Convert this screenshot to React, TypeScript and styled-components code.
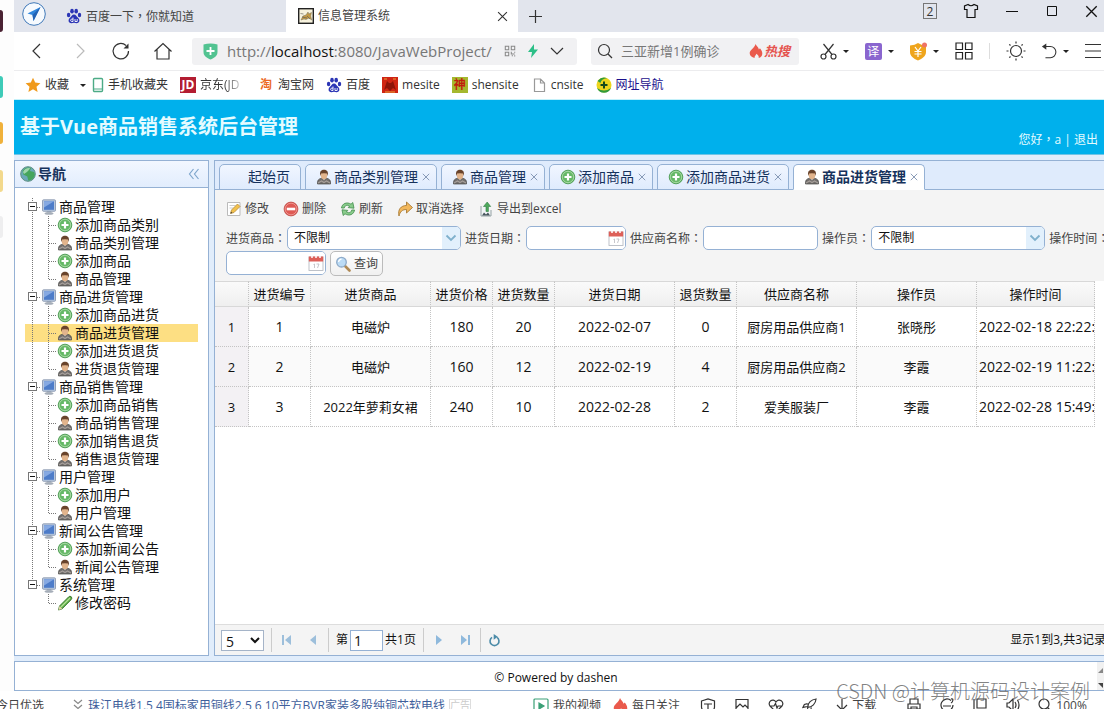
import React from "react";
import styled, { createGlobalStyle, css } from "styled-components";

const Global = createGlobalStyle`
  *, *::before, *::after { box-sizing: border-box; }
  html, body, #root { height: 100%; margin: 0; }
  body {
    overflow: hidden;
    background: #fff;
    font: 12px/18px "Open Sans", "Noto Sans CJK SC", sans-serif;
    color: #333;
  }
  button, input, select { font: inherit; color: inherit; margin: 0; }
  button { background: none; border: 0; padding: 0; }
  svg { display: block; flex: none; }
  a { color: inherit; text-decoration: none; }
`;

const LINE = "#95b1d4";

/* ---------- page frame ---------- */

const Screen = styled.div`
  position: relative;
  display: flex;
  flex-direction: column;
  height: 100vh;
  overflow: hidden;
`;
const Desk = styled.div`
  display: flex;
  flex: 1;
  min-height: 0;
`;
const Gutter = styled.aside`
  display: flex;
  flex-direction: column;
  flex: 0 0 14px;
  gap: 24px;
  padding-top: 10px;
  background: #fdfdfd;
`;
const Chip = styled.span<{ $color: string; $space?: number }>`
  width: 3px;
  height: 22px;
  margin-top: ${(p) => p.$space ?? 0}px;
  border-radius: 0 6px 6px 0;
  background: ${(p) => p.$color};
`;
const Browser = styled.div`
  display: flex;
  flex-direction: column;
  flex: 1;
  min-width: 0;
`;
/* Full-width punctuation centred in its square. */
const Mark = styled.i`
  font-family: "Noto Sans CJK TC", sans-serif;
  font-style: normal;
`;

/* ---------- browser chrome ---------- */

const TabStrip = styled.div`
  display: flex;
  height: 32px;
  background: #e2e5ed;
`;
const BrowserTab = styled.div<{ $active?: boolean }>`
  display: flex;
  align-items: center;
  gap: 4px;
  flex: 0 0 232px;
  padding: 0 10px 0 12px;
  background: ${(p) => (p.$active ? "#fff" : "transparent")};
  color: #444;
  span { flex: 1; white-space: nowrap; }
`;
const Launcher = styled.button`
  flex: 0 0 40px;
  padding-left: 8px;
  margin-top: -4px;
`;
const NewTab = styled.button`
  padding: 0 11px;
`;
const WindowTools = styled.div`
  display: flex;
  align-items: center;
  gap: 26px;
  height: 22px;
  margin-left: auto;
  padding-right: 6px;
`;
const WindowCount = styled.button`
  width: 14px;
  height: 16px;
  border: 1px solid #777;
  line-height: 13px;
`;
const AddressRow = styled.div`
  display: flex;
  align-items: center;
  height: 39px;
  border-bottom: 1px solid #ececee;
`;
const NavButtons = styled.div`
  display: flex;
  gap: 22px;
  flex: 0 0 178px;
  padding-left: 13px;
`;
const UrlBox = styled.div`
  display: flex;
  align-items: center;
  flex: 0 1 385px;
  height: 27px;
  padding: 0 13px 0 11px;
  border-radius: 3px;
  background: #f1f1f3;
`;
const Url = styled.div`
  flex: 1;
  padding-left: 9px;
  font-size: 15px;
  color: #777;
  white-space: nowrap;
  b { font-weight: 400; color: #111; }
`;
const UrlTools = styled.div`
  display: flex;
  align-items: center;
  gap: 11px;
`;
const SearchBox = styled.label`
  display: flex;
  align-items: center;
  gap: 8px;
  flex: 0 1 208px;
  min-width: 0;
  height: 27px;
  margin-left: 14px;
  padding: 0 9px 0 6px;
  border-radius: 3px;
  background: #f1f1f3;
  input {
    flex: 1;
    min-width: 0;
    padding: 0;
    border: 0;
    outline: 0;
    background: none;
    font-size: 13px;
  }
  input::placeholder { color: #777; opacity: 1; }
`;
const Hot = styled.span`
  display: flex;
  align-items: center;
  gap: 1px;
  font-size: 13px;
  font-weight: 700;
  font-style: italic;
  color: #e5544f;
`;
const AddressTools = styled.div`
  display: flex;
  align-items: center;
  justify-content: space-between;
  flex: 1;
  padding: 0 3px 0 21px;
`;
const WithCaret = styled.button`
  display: flex;
  align-items: center;
  gap: 6px;
  &::after {
    content: "";
    border: 3px solid transparent;
    border-top-color: #222;
    border-bottom: 0;
  }
`;
const Translate = styled.span`
  width: 17px;
  height: 17px;
  border-radius: 2px;
  background: #8a66cf;
  color: #fff;
  line-height: 17px;
`;
const Divider = styled.span`
  width: 1px;
  height: 16px;
  background: #ddd;
`;
const Bookmarks = styled.nav`
  display: flex;
  align-items: center;
  gap: 12px;
  height: 29px;
  padding-left: 11px;
  border-bottom: 1px solid #c4f1fa;
`;
const Bookmark = styled.a<{ $tone?: string; $fade?: boolean }>`
  display: flex;
  align-items: center;
  gap: 4px;
  font-size: 12px;
  white-space: nowrap;
  color: ${(p) => p.$tone ?? "#333"};
  ${(p) => p.$fade && css`
    min-width: 66px;
    span:last-child {
      background: linear-gradient(90deg, #333 60%, #ccc);
      background-clip: text;
      color: transparent;
    }
  `}
`;
const MenuCaret = styled.span`
  margin-left: 7px;
  margin-right: -6px;
  border: 3px solid transparent;
  border-top-color: #222;
  border-bottom: 0;
`;
const Square = styled.span<{ $bg: string; $fg: string }>`
  width: 16px;
  height: 16px;
  background: ${(p) => p.$bg};
  color: ${(p) => p.$fg};
  font-weight: 700;
  line-height: 16px;
  text-align: center;
`;

/* ---------- application ---------- */

const App_ = styled.main`
  display: flex;
  flex-direction: column;
  flex: 1;
  min-height: 0;
  background: #e1edfb;
`;
const Banner = styled.header`
  display: flex;
  justify-content: space-between;
  height: 55px;
  padding: 0 6px;
  border-bottom: 1px solid #6fc4e6;
  background: #00b0ec;
  color: #e4fbff;
  h1 { margin: 0; font-size: 20px; line-height: 54px; }
`;
const Account = styled.div`
  align-self: flex-end;
  padding-bottom: 5px;
  white-space: pre;
`;
const Columns = styled.div`
  display: flex;
  flex: 1;
  gap: 5px;
  min-height: 0;
  margin: 5px -6px 5px 0;
`;
const Sidebar = styled.aside`
  flex: 0 0 195px;
  border: 1px solid ${LINE};
  background: #fff;
`;
const SideHead = styled.div`
  display: flex;
  align-items: center;
  gap: 2px;
  height: 27px;
  padding: 0 8px 0 5px;
  border-bottom: 1px solid ${LINE};
  background: linear-gradient(#f2f7ff, #e2edfd);
  color: #16325c;
  h2 { flex: 1; margin: 0; font-size: 14px; line-height: 18px; }
`;
const Tree = styled.ul`
  margin: 0;
  padding: 10px;
  list-style: none;
  font-size: 14px;
  color: #111;
`;
const Node = styled.a<{ $selected?: boolean }>`
  display: flex;
  align-items: center;
  height: 18px;
  background: ${(p) => (p.$selected ? "#fddf83" : "transparent")};
  white-space: nowrap;
  span { margin-left: 2px; }
`;
const Work = styled.section`
  display: flex;
  flex-direction: column;
  flex: 1;
  min-width: 0;
  border: 1px solid ${LINE};
  background: #fff;
`;
const Tabs = styled.div`
  display: flex;
  gap: 4px;
  height: 29px;
  padding: 3px 4px 0;
  border-bottom: 1px solid ${LINE};
  background: #dfebfc;
`;
const Tab = styled.button<{ $active?: boolean; $plain?: boolean }>`
  display: flex;
  align-items: center;
  height: 26px;
  padding: 0 ${(p) => (p.$plain ? 10 : 6)}px 0 ${(p) => (p.$plain ? 28 : 10)}px;
  border: 1px solid ${LINE};
  border-bottom-color: ${(p) => (p.$active ? "#fff" : LINE)};
  border-radius: 5px 5px 0 0;
  background: ${(p) => (p.$active ? "#fff" : "linear-gradient(#f1f6ff, #dfebfd)")};
  font-size: 14px;
  font-weight: ${(p) => (p.$active ? 700 : 400)};
  color: #16325c;
  white-space: nowrap;
  span { margin: 0 4px 0 2px; }
`;
const Tools = styled.div`
  padding: 6px 11px 5px;
  background: #f4f4f4;
`;
const ToolRow = styled.div`
  display: flex;
  align-items: center;
  gap: 14px;
  height: 26px;
  margin-bottom: 4px;
  color: #444;
`;
const ToolButton = styled.button`
  display: flex;
  align-items: center;
  gap: 3px;
`;
const FilterRow = styled.div`
  display: flex;
  gap: 4px;
  height: 25px;
  color: #444;
`;
const Field = styled.label<{ $width: number }>`
  display: flex;
  align-items: center;
  gap: 1px;
  flex: none;
  white-space: nowrap;
  height: 24px;
  > div {
    position: relative;
    width: ${(p) => p.$width}px;
  }
  input, select {
    display: block;
    width: 100%;
    height: 24px;
    padding: 0 6px;
    border: 1px solid ${LINE};
    border-radius: 5px;
    outline: 0;
    background: #fff;
    color: #111;
    appearance: none;
  }
`;
const Adorn = styled.span<{ $tint?: boolean }>`
  position: absolute;
  top: 1px;
  right: 1px;
  display: flex;
  align-items: center;
  justify-content: center;
  width: 18px;
  height: 22px;
  border-radius: 0 4px 4px 0;
  background: ${(p) => (p.$tint ? "#e2f0fc" : "#fff")};
  pointer-events: none;
`;
const QueryButton = styled.button`
  display: flex;
  align-items: center;
  gap: 3px;
  height: 25px;
  padding: 0 4px;
  border: 1px solid #bbb;
  border-radius: 5px;
  background: linear-gradient(#fff, #f0f0f0);
`;
const GridArea = styled.div`
  flex: 1;
  min-height: 0;
  overflow: hidden;
`;
const Grid = styled.table`
  width: 880px;
  table-layout: fixed;
  border-collapse: separate;
  border-spacing: 0;
  color: #111;
  th, td {
    padding: 0 2px;
    border: 0 dotted #c4c4c4;
    border-width: 0 1px 1px 0;
    overflow: hidden;
    white-space: nowrap;
    text-align: center;
    font-weight: 400;
    font-size: 13px;
  }
  th:last-child, td:last-child { text-align: left; }
  thead th {
    height: 26px;
    border-top: 1px solid #d8d8d8;
    border-bottom: 1px solid #d8d8d8;
    background: linear-gradient(#fafafa, #efefef);
  }
  thead th:last-child { text-align: center; }
  tbody th { height: 40px; background: #f3f1f4; }
  tbody tr:nth-child(even) td { background: #fafafa; }
`;
const Cell = styled.td<{ $numeric?: boolean }>`
  && { font-size: ${(p) => (p.$numeric ? 14 : 13)}px; }
`;
const Pager = styled.div`
  display: flex;
  align-items: center;
  height: 31px;
  padding: 0 3px 0 6px;
  border-top: 1px solid #ddd;
  background: #f4f4f4;
  color: #111;
  white-space: nowrap;
`;
const PageSize = styled.select`
  width: 43px;
  height: 21px;
  padding: 0;
  border: 1px solid #a5b4c8;
  background: #fff;
  font-size: 14px;
  line-height: 18px;
`;
const PagerGroup = styled.div`
  display: flex;
  align-items: center;
  gap: 10px;
  height: 24px;
  margin-left: 7px;
  padding-left: 7px;
  border-left: 1px solid #ccc;
`;
const PageNumber = styled.label`
  display: flex;
  align-items: center;
  gap: 2px;
  input {
    width: 33px;
    height: 21px;
    padding: 0 3px;
    border: 1px solid ${LINE};
    font-size: 14px;
  }
`;
const Total = styled.span`
  margin-left: auto;
`;
const Footer = styled.footer`
  display: flex;
  height: 30px;
  border: 1px solid ${LINE};
  border-right: 0;
  background: #fff;
  color: #111;
  p { flex: 1; margin: 0; text-align: center; line-height: 32px; font-size: 12px; }
`;
const ScrollStub = styled.div`
  display: flex;
  flex-direction: column;
  justify-content: space-between;
  width: 7px;
  padding: 6px 0 2px;
  background: #f1f1f1;
`;

/* ---------- browser status line ---------- */

const Status = styled.div`
  display: flex;
  align-items: flex-start;
  height: 18px;
  overflow: hidden;
  white-space: nowrap;
  line-height: 29px;
  color: #444;
  > * { flex: none; }
  svg { margin-top: 7px; }
`;
const StatusItem = styled.a<{ $tone?: string }>`
  display: flex;
  gap: 4px;
  margin-right: 12px;
  color: ${(p) => p.$tone ?? "#444"};
`;
const Promo = styled.div`
  display: flex;
  gap: 4px;
  flex: 0 0 533px;
  > span { margin-left: -4px; margin-right: 24px; }
`;
const AdTag = styled.small`
  height: 12px;
  margin-top: 8px;
  border: 1px solid #ddd;
  font-size: 10px;
  line-height: 10px;
  color: #ccc;
`;
const StatusIcons = styled.div`
  display: flex;
  flex: 1;
  justify-content: space-between;
  padding: 0 5px 0 8px;
`;
const Watermark = styled.div`
  position: absolute;
  right: 14px;
  bottom: 4px;
  font: 300 20px/28px "Noto Sans CJK SC", sans-serif;
  color: rgba(90, 90, 90, 0.75);
  pointer-events: none;
`;

/* ---------- icons ---------- */

type IconProps = { w?: number; h?: number; box?: string; color?: string; children: React.ReactNode };
const Line = ({ w = 20, h = w, box = "0 0 20 20", color = "#333", children }: IconProps) => (
  <svg width={w} height={h} viewBox={box} fill="none" stroke={color} strokeWidth="1.2" aria-hidden="true">
    {children}
  </svg>
);
const Art = ({ w = 16, h = w, box = "0 0 16 16", children }: IconProps) => (
  <svg width={w} height={h} viewBox={box} aria-hidden="true">{children}</svg>
);

const Paw = () => (
  <Art>
    <g fill="#2b35b5">
      <ellipse cx="2.6" cy="7" rx="1.7" ry="2.2" />
      <ellipse cx="6" cy="3.2" rx="1.8" ry="2.4" />
      <ellipse cx="10.2" cy="3.2" rx="1.8" ry="2.4" />
      <ellipse cx="13.5" cy="7" rx="1.7" ry="2.2" />
      <path d="M8 6.600c2 0 2.600 2 4 3.200 2.200 1.800 1.800 5.400-1.400 5.400-1 0-1.700-.4-2.600-.4s-1.600.4-2.600.4c-3.200 0-3.600-3.600-1.400-5.400C5.400 8.600 6 6.600 8 6.600z" />
    </g>
    <path d="M7 9.500v4H5.800c-1.600 0-1.600-2.400 0-2.400H7M9 11v2.500h2.200V11" fill="none" stroke="#fff" strokeWidth=".9" />
  </Art>
);
const CatIcon = () => (
  <Art>
    <rect x=".7" y=".7" width="14.600" height="14.600" fill="#f7f2dd" stroke="#222" strokeWidth="1.400" />
    <path d="M3 12l2-4 3-1 2-3 .8 2 2.700-1.500-.8 3.500 1 4-2.700-2-3 1.500-2-.5z" fill="#c49a45" stroke="#77705a" strokeWidth=".5" />
    <path d="M2.500 5.500l3 .5M4 9l5 1M9 8l3 3" stroke="#555" strokeWidth=".6" />
  </Art>
);
const Flame = ({ size = 14 }: { size?: number }) => (
  <Art w={size}>
    <path d="M7.500 0c.6 2.300 3.400 3.500 3.800 6.200l1.200-1.400c1.500 2 2.700 3.700 2.700 6 0 2.700-1.800 4.600-4.200 5.200.8-1.800-.6-3.400-2.600-5-.2 1.900-2.600 2.700-2 5C3.200 15.500.8 13.600.8 10.700.8 6.600 6.200 5 7.500 0z" fill="#ea5a4c" />
  </Art>
);
const Shield = () => (
  <Art w={15} h={17} box="0 0 15 17">
    <path d="M.5 1.500Q7.500-.5 14.500 1.500V9c0 4-3.500 6-7 7.500C4 15 .5 13 .5 9z" fill="#52c391" />
    <path d="M7.500 4v8M3.500 8h8" stroke="#fff" strokeWidth="1.800" />
  </Art>
);
const YuanShield = () => (
  <Art w={18} h={19} box="0 0 18 19">
    <path d="M1 3.500Q6 3 9 1q3 2 8 2.500V10c0 4-3.500 6.500-8 8.500C4.500 16.500 1 14 1 10z" fill="#efa51d" />
    <path d="M6 5l3 4 3-4M9 9v6M5.500 9.500h7M5.500 12h7" stroke="#fff" strokeWidth="1.200" fill="none" />
    <circle cx="15.500" cy="3" r="2.500" fill="#ef7466" />
  </Art>
);
const Globe = () => (
  <Art>
    <circle cx="8" cy="8" r="7.300" fill="#6aa9b8" stroke="#5d8f83" />
    <path d="M2.500 5c2-4 7-4 8.500-3l-1 3 4 1 .8 3c-1 4-4 5.500-6.500 5.500l-1-4-4-2z" fill="#45a55c" />
    <path d="M3 6Q5 1.500 10 2 9 5 4 8z" fill="#b5e2c2" opacity=".8" />
  </Art>
);
const Monitor = () => (
  <Art>
    <path d="M6 12h4l1 2.500H5z" fill="#b9c0c9" />
    <ellipse cx="8" cy="14.500" rx="4.500" ry="1.300" fill="#a5adb8" />
    <rect x="1.500" y=".8" width="13" height="11.500" rx="1" fill="#b7c7de" stroke="#8191aa" strokeWidth=".8" />
    <rect x="3" y="2.300" width="10" height="8.500" fill="#4d7cc9" />
    <path d="M3 2.300h10L3 8.500z" fill="#86a9e2" />
  </Art>
);
const Plus = () => (
  <Art>
    <circle cx="8" cy="8" r="6.800" fill="#65b866" stroke="#4a9a50" strokeWidth=".9" />
    <circle cx="8" cy="8" r="5.700" fill="none" stroke="#b7e0b2" strokeWidth=".8" />
    <path d="M8 4.500v7M4.500 8h7" stroke="#fff" strokeWidth="2.200" />
  </Art>
);
const Person = () => (
  <Art>
    <path d="M1.500 15c-.5-3.500 1-5.200 4-5.800h5c3 .6 4.500 2.300 4 5.800z" fill="#716d6b" stroke="#4b4a49" strokeWidth=".7" />
    <path d="M2 14l3.500-2 2.500 1.500 2.500-1.500 3.500 2" stroke="#a7a09b" strokeWidth="1.100" fill="none" />
    <path d="M6.500 9.500L8 11.500l1.500-2z" fill="#c9c2bd" />
    <ellipse cx="8" cy="6.300" rx="3.200" ry="3.900" fill="#e2b48c" />
    <path d="M4.300 7C3.400 3 4.800.8 8 .8s4.600 2.200 3.700 6.200l-.8-2.400q-2.900-.9-5.800 0z" fill="#69432b" />
  </Art>
);
const Pencil = () => (
  <Art>
    <path d="M1.500 15l1-4L11.500 2q1.500-1.500 2.800-.2T14 4.800L5.200 13.800z" fill="#5cab46" stroke="#35752b" strokeWidth=".9" />
    <path d="M4 12L13 3" stroke="#b5e398" strokeWidth="1.200" />
    <path d="M1.500 15l1-4 2.700 2.800z" fill="#e7d6a8" />
  </Art>
);
const EditNote = () => (
  <Art>
    <path d="M1.500 1.500h12.500v13H1.500z" fill="#fff" stroke="#bbb" />
    <path d="M3.500 4.500h6M3.500 7h4" stroke="#ccc" />
    <path d="M4.500 12.500l1-3.500 6-6 2.500 2.500L8 11.500z" fill="#f2c14c" stroke="#b58a3c" strokeWidth=".8" />
    <path d="M4.500 12.500l.5-1.800 1.300 1.300z" fill="#333" />
  </Art>
);
const Minus = () => (
  <Art>
    <circle cx="8" cy="8" r="6.900" fill="#df5a54" stroke="#bb4743" strokeWidth=".8" />
    <circle cx="8" cy="8" r="5.800" fill="none" stroke="#f2a9a4" strokeWidth=".7" />
    <rect x="3.800" y="6.700" width="8.400" height="2.600" fill="#fff" />
  </Art>
);
const Reload = () => (
  <Art>
    <path d="M1.500 7C2 2.500 7 .5 11 3.200L12.800 1.500 14 7.200 8.200 6.600 9.600 5C7 3.500 4.800 4.500 4.300 7z" fill="#8acc8c" stroke="#3f8c4a" strokeWidth=".8" />
    <path d="M14.500 9c-.5 4.500-5.500 6.500-9.500 3.800L3.200 14.500 2 8.800l5.800.6L6.400 11c2.600 1.500 4.800.5 5.300-2z" fill="#8acc8c" stroke="#3f8c4a" strokeWidth=".8" />
  </Art>
);
const Redo = () => (
  <Art>
    <path d="M2 15C.5 8.500 4 4.500 9.500 4.500V1l6 5.500-6 5.500V8.500C5.500 8.500 3 10.500 2 15z" fill="#f2b75b" stroke="#a87a35" strokeWidth=".9" />
  </Art>
);
const Export = () => (
  <Art>
    <path d="M3 5v10h10V9" fill="#f0f4f5" stroke="#8b989c" strokeWidth=".9" />
    <path d="M4 14.500l2-3 2 2 2-2 2 3z" fill="#46545c" />
    <path d="M8 10.500V5.500H5.500L9.200 1l3.500 4.500h-2.300v5z" fill="#4ea95c" stroke="#2f7d43" strokeWidth=".6" />
  </Art>
);
const CalendarIcon = () => (
  <Art>
    <rect x="1" y="2" width="14" height="13.500" fill="#fff" stroke="#b8bcc4" strokeWidth=".9" />
    <path d="M.8 1.500h14.400V6.500H.8z" fill="#dd5f58" />
    <path d="M4 0v3M8 0v3M12 0v3" stroke="#fff" strokeWidth="1.500" />
    <path d="M5.500 9.500L6.500 9v4M8.500 9h2.500l-1.500 4" stroke="#b9b9bf" strokeWidth=".8" fill="none" />
  </Art>
);
const Lens = () => (
  <Art>
    <path d="M10 10l4.500 4.500" stroke="#b08a55" strokeWidth="2.600" strokeLinecap="round" />
    <circle cx="6.500" cy="6.200" r="4.800" fill="#bcdcf6" stroke="#8fabc9" strokeWidth="1.300" />
    <path d="M3.500 6q.5-2.700 3-2.900" stroke="#fff" strokeWidth="1.200" fill="none" />
  </Art>
);
const CloseX = ({ size = 8, color = "#6e84a5" }: { size?: number; color?: string }) => (
  <Line w={size} box="0 0 10 10" color={color}><path d="M1 1l8 8M9 1L1 9" strokeWidth="1" /></Line>
);
const Chevron = ({ color = "#7fb0cc" }: { color?: string }) => (
  <Line w={12} h={8} box="0 0 12 8" color={color}><path d="M1.500 1.500L6 6l4.500-4.500" strokeWidth="1.800" /></Line>
);

/* Dotted connector of a tree row: how far the stem runs and whether it branches. */
const Join = ({ kind }: { kind: "stem" | "branch" | "last" | "box" | "boxLast" | "none" }) => (
  <svg width="16" height="18" viewBox="0 0 16 18" fill="none" stroke="#777" strokeDasharray="1 1" aria-hidden="true">
    {kind !== "none" && <path d={kind === "last" || kind === "boxLast" ? "M7.500 0v9" : "M7.500 0v18"} />}
    {kind !== "none" && kind !== "stem" && <path d="M8 9.500h8" />}
    {kind.startsWith("box") && (
      <g strokeDasharray="none">
        <rect x="3.500" y="4.500" width="8" height="8" fill="#fff" stroke="#777" />
        <path d="M5 8.500h5" stroke="#111" />
      </g>
    )}
  </svg>
);

/* ---------- data ---------- */

const leafIcons = { add: Plus, person: Person, pencil: Pencil };
const menu: { title: string; items: [keyof typeof leafIcons, string][] }[] = [
  { title: "商品管理", items: [["add", "添加商品类别"], ["person", "商品类别管理"], ["add", "添加商品"], ["person", "商品管理"]] },
  { title: "商品进货管理", items: [["add", "添加商品进货"], ["person", "商品进货管理"], ["add", "添加进货退货"], ["person", "进货退货管理"]] },
  { title: "商品销售管理", items: [["add", "添加商品销售"], ["person", "商品销售管理"], ["add", "添加销售退货"], ["person", "销售退货管理"]] },
  { title: "用户管理", items: [["add", "添加用户"], ["person", "用户管理"]] },
  { title: "新闻公告管理", items: [["add", "添加新闻公告"], ["person", "新闻公告管理"]] },
  { title: "系统管理", items: [["pencil", "修改密码"]] },
];
const openTabs: [React.FC, string][] = [
  [Person, "商品类别管理"], [Person, "商品管理"], [Plus, "添加商品"], [Plus, "添加商品进货"], [Person, "商品进货管理"],
];
const tools: [React.FC, string][] = [
  [EditNote, "修改"], [Minus, "删除"], [Reload, "刷新"], [Redo, "取消选择"], [Export, "导出到excel"],
];
const widths = [34, 62, 120, 62, 62, 120, 62, 120, 120, 118];
const heads = ["进货编号", "进货商品", "进货价格", "进货数量", "进货日期", "退货数量", "供应商名称", "操作员", "操作时间"];
const rows = [
  ["1", "电磁炉", "180", "20", "2022-02-07", "0", "厨房用品供应商1", "张晓彤", "2022-02-18 22:22:"],
  ["2", "电磁炉", "160", "12", "2022-02-19", "4", "厨房用品供应商2", "李霞", "2022-02-19 11:22:"],
  ["3", "2022年萝莉女裙", "240", "10", "2022-02-28", "2", "爱美服装厂", "李霞", "2022-02-28 15:49:"],
];

/* ---------- sections ---------- */

const Caption = ({ text }: { text: string }) => <span>{text}<Mark>：</Mark></span>;

const Choice = ({ label }: { label: string }) => (
  <Field $width={174}>
    <Caption text={label} />
    <div>
      <select><option>不限制</option></select>
      <Adorn $tint><Chevron /></Adorn>
    </div>
  </Field>
);

const Chrome = () => (
  <>
    <TabStrip>
      <Launcher aria-label="浏览器">
        <Art w={24} box="0 0 24 24">
          <circle cx="12" cy="12" r="11.300" fill="#f6fafe" stroke="#3f78b8" strokeWidth="1" />
          <path d="M18.500 5L5.500 11.500l5 1.500 1 6z" fill="#2f86dd" />
          <path d="M18.500 5l-8 8 1 6z" fill="#2463b4" />
        </Art>
      </Launcher>
      <BrowserTab><Paw /><span>百度一下<Mark>，</Mark>你就知道</span></BrowserTab>
      <BrowserTab $active>
        <CatIcon /><span>信息管理系统</span>
        <button aria-label="关闭标签"><CloseX size={11} color="#333" /></button>
      </BrowserTab>
      <NewTab aria-label="新标签"><Line w={13} box="0 0 13 13"><path d="M6.500 0v13M0 6.500h13" /></Line></NewTab>
      <WindowTools>
        <WindowCount>2</WindowCount>
        <button aria-label="皮肤"><Line w={16} box="0 0 16 16" color="#111"><path d="M5 1.500L1.500 3v3.500H4v8h8v-8h2.500V3L11 1.500q-3 2.500-6 0z" /></Line></button>
        <button aria-label="最小化"><Line w={14} box="0 0 14 14" color="#111"><path d="M1 7.500h12" strokeWidth="1" /></Line></button>
        <button aria-label="最大化"><Line w={14} box="0 0 14 14" color="#111"><path d="M2.500 2.500h9v9h-9z" strokeWidth="1" /></Line></button>
        <button aria-label="关闭"><CloseX size={13} color="#111" /></button>
      </WindowTools>
    </TabStrip>
    <AddressRow>
      <NavButtons>
        <button aria-label="后退"><Line><path d="M13 3l-7 7 7 7" /></Line></button>
        <button aria-label="前进"><Line color="#bbb"><path d="M8 3l7 7-7 7" /></Line></button>
        <button aria-label="刷新"><Line><path d="M17.500 10A7.700 7.700 0 1 1 15 4.500" /><path d="M17.500 2.500v5h-5z" fill="#333" stroke="none" /></Line></button>
        <button aria-label="主页"><Line><path d="M1.500 10.500L10 2.500l8.500 8M4 8.500V18h12V8.500" /></Line></button>
      </NavButtons>
      <UrlBox>
        <Shield />
        <Url>http://<b>localhost</b>:8080/JavaWebProject/</Url>
        <UrlTools>
          <Line w={12} box="0 0 14 14" color="#888"><path d="M1.500 1.500h4v4h-4zM8.500 1.500h4v4h-4zM1.500 8.500h4v4h-4zM8.500 8v2.500h4M9 12.500h1.500M12.500 8v1M12.500 12v1.500" /></Line>
          <Art w={12} h={14} box="0 0 12 14"><path d="M7 0L1 8h4l-1 6 7-8.500H7z" fill="#2cbf87" /></Art>
          <Line w={14} box="0 0 14 14"><path d="M1 4l6 6 6-6" /></Line>
        </UrlTools>
      </UrlBox>
      <SearchBox>
        <Line w={16} box="0 0 16 16"><circle cx="7" cy="7" r="5.500" /><path d="M11 11l4 4" /></Line>
        <input aria-label="搜索" placeholder="三亚新增1例确诊" />
        <Hot><Flame />热搜</Hot>
      </SearchBox>
      <AddressTools>
        <WithCaret aria-label="截图"><Line w={17} box="0 0 17 17"><circle cx="3.500" cy="13.500" r="2.500" /><circle cx="13.500" cy="13.500" r="2.500" /><path d="M3.500 1l8.500 10.500M13.500 1L5 11.500" /></Line></WithCaret>
        <WithCaret><Translate>译</Translate></WithCaret>
        <WithCaret aria-label="购物"><YuanShield /></WithCaret>
        <button aria-label="应用"><Line w={18} box="0 0 18 18" color="#222"><path d="M1 1h6.500v6.500H1zM10.500 1H17v6.500h-6.500zM1 10.500h6.500V17H1zM10.500 10.500H17V17h-6.500z" /></Line></button>
        <Divider />
        <button aria-label="亮度"><Line><circle cx="10" cy="10" r="5.500" /><path d="M10 .5v2M10 17.500v2M.5 10h2M17.500 10h2M3.300 3.300l1.200 1.200M15.500 15.500l1.200 1.200M3.300 16.700l1.200-1.200M15.500 4.500l1.200-1.200" /></Line></button>
        <WithCaret aria-label="恢复"><Line w={16} box="0 0 16 18"><path d="M2 4h7.500a5.500 5.500 0 0 1 0 12.500H4" /><path d="M5 .5v7L0 4z" fill="#333" stroke="none" /></Line></WithCaret>
        <button aria-label="菜单"><Line w={16} box="0 0 16 16"><path d="M0 1.500h16M0 8h16M0 14.500h16" /></Line></button>
      </AddressTools>
    </AddressRow>
    <Bookmarks>
      <Bookmark href="#"><Art><path d="M8 .8l2.200 4.800 5.200.6-3.900 3.500 1.100 5.200L8 12.300l-4.600 2.600 1.100-5.200L.6 6.200l5.200-.6z" fill="#f09a1c" /></Art><span>收藏</span><MenuCaret /></Bookmark>
      <Bookmark href="#"><Art w={12} h={16} box="0 0 12 16"><rect x="1.500" y="1.500" width="9" height="13" rx="1" fill="#fff" stroke="#4cab86" strokeWidth="1.400" /><path d="M2 12h8" stroke="#4cab86" /></Art><span>手机收藏夹</span></Bookmark>
      <Bookmark href="#" $fade><Square $bg="#b31d32" $fg="#fff">JD</Square><span>京东(JD</span></Bookmark>
      <Bookmark href="#"><Square $bg="#fff" $fg="#ec6a23">淘</Square><span>淘宝网</span></Bookmark>
      <Bookmark href="#"><Paw /><span>百度</span></Bookmark>
      <Bookmark href="#"><Art><path d="M0 0h16v16H0z" fill="#cf2413" /><path d="M2 13l3-9 2 2h2l2-2 3 9-3-2-3 3-3-3z" fill="#8d1309" /><path d="M2 2h3M11 2h3M3 15h10" stroke="#e8a43a" /></Art><span>mesite</span></Bookmark>
      <Bookmark href="#"><Square $bg="#a5b82e" $fg="#c11d0c">神</Square><span>shensite</span></Bookmark>
      <Bookmark href="#"><Line w={16} box="0 0 16 16" color="#999"><path d="M3.500 2h6l4 4v8.500h-10zM9.500 2v4h4" /></Line><span>cnsite</span></Bookmark>
      <Bookmark href="#" $tone="#1a0f8c"><Art><circle cx="8" cy="8" r="7.500" fill="#ecd51d" /><path d="M1 11A7.500 7.500 0 0 0 15 11Q8 16 1 11zM1.500 4Q6-1 11 1.200 5 2 4.500 6z" fill="#2f9a3c" /><path d="M8 4.500v7M4.500 8h7" stroke="#144a1c" strokeWidth="2" /></Art><span>网址导航</span></Bookmark>
    </Bookmarks>
  </>
);

const Navigation = () => (
  <Sidebar>
    <SideHead>
      <Globe />
      <h2>导航</h2>
      <button aria-label="收起"><Line w={12} box="0 0 12 12" color="#7fa6cc"><path d="M5.500 1L1.500 6l4 5M10.500 1l-4 5 4 5" /></Line></button>
    </SideHead>
    <Tree>
      {menu.map((group, g) => {
        const lastGroup = g === menu.length - 1;
        return (
          <React.Fragment key={group.title}>
            <li><Node href="#"><Join kind={lastGroup ? "boxLast" : "box"} /><Monitor /><span>{group.title}</span></Node></li>
            {group.items.map(([icon, text], i) => {
              const Leaf = leafIcons[icon];
              return (
                <li key={text}>
                  <Node href="#" $selected={text === "商品进货管理"}>
                    <Join kind={lastGroup ? "none" : "stem"} />
                    <Join kind={i === group.items.length - 1 ? "last" : "branch"} />
                    <Leaf /><span>{text}</span>
                  </Node>
                </li>
              );
            })}
          </React.Fragment>
        );
      })}
    </Tree>
  </Sidebar>
);

const Workspace = () => (
  <Work>
    <Tabs>
      <Tab $plain>起始页</Tab>
      {openTabs.map(([Icon, text], i) => (
        <Tab key={text} $active={i === openTabs.length - 1}><Icon /><span>{text}</span><CloseX /></Tab>
      ))}
    </Tabs>
    <Tools>
      <ToolRow>
        {tools.map(([Icon, text]) => <ToolButton key={text}><Icon />{text}</ToolButton>)}
      </ToolRow>
      <FilterRow>
        <Choice label="进货商品" />
        <Field $width={100}><Caption text="进货日期" /><div><input type="text" /><Adorn><CalendarIcon /></Adorn></div></Field>
        <Field $width={115}><Caption text="供应商名称" /><div><input type="text" /></div></Field>
        <Choice label="操作员" />
        <Field htmlFor="operated" $width={0}><Caption text="操作时间" /></Field>
      </FilterRow>
      <FilterRow>
        <Field as="div" $width={100}><div><input id="operated" type="text" /><Adorn><CalendarIcon /></Adorn></div></Field>
        <QueryButton><Lens />查询</QueryButton>
      </FilterRow>
    </Tools>
    <GridArea>
      <Grid>
        <colgroup>{widths.map((w, i) => <col key={i} width={w} />)}</colgroup>
        <thead><tr><th />{heads.map((h) => <th key={h}>{h}</th>)}</tr></thead>
        <tbody>
          {rows.map((row, r) => (
            <tr key={r}>
              <th>{r + 1}</th>
              {row.map((value, c) => <Cell key={c} $numeric={/^[\d\s:-]+$/.test(value)}>{value}</Cell>)}
            </tr>
          ))}
        </tbody>
      </Grid>
    </GridArea>
    <Pager>
      <PageSize aria-label="每页条数"><option>5</option></PageSize>
      <PagerGroup>
        <button aria-label="首页"><Art><path d="M3 3h2v10H3zM12 3v10L6 8z" fill="#9dbfdb" /></Art></button>
        <button aria-label="上一页"><Art><path d="M11 3v10L5 8z" fill="#9dbfdb" /></Art></button>
      </PagerGroup>
      <PagerGroup>
        <PageNumber>第<input type="text" defaultValue="1" />共1页</PageNumber>
      </PagerGroup>
      <PagerGroup>
        <button aria-label="下一页"><Art><path d="M5 3v10l6-5z" fill="#8fb9dc" /></Art></button>
        <button aria-label="末页"><Art><path d="M11 3h2v10h-2zM4 3v10l6-5z" fill="#8fb9dc" /></Art></button>
      </PagerGroup>
      <PagerGroup>
        <button aria-label="重新加载"><Art w={13}><path d="M5 4.200A5.500 5.500 0 1 0 11 4.200" fill="none" stroke="#4b8ba8" strokeWidth="2" /><path d="M7 0l5 3.500L7 7z" fill="#4b8ba8" /></Art></button>
      </PagerGroup>
      <Total>显示1到3,共3记录</Total>
    </Pager>
  </Work>
);

const StatusLine = () => (
  <Status>
    <Promo>
      <span>今日优选</span>
      <Line w={12} box="0 0 12 12" color="#888"><path d="M2 2l4 3.500L10 2M2 7l4 3.500L10 7" /></Line>
      <StatusItem href="#" $tone="#3f5f9c">珠江电线1.5 4国标家用铜线2.5 6 10平方BVR家装多股纯铜芯软电线<AdTag>广告</AdTag></StatusItem>
    </Promo>
    <StatusItem href="#"><Line w={16} box="0 0 16 16" color="#3aa076"><rect x="1" y="1" width="14" height="14" rx="1" /><path d="M6 5v6l5-3z" fill="#3aa076" /></Line>我的视频</StatusItem>
    <StatusItem href="#"><Flame size={15} />每日关注</StatusItem>
    <StatusIcons>
      <Line w={16} box="0 0 16 16"><path d="M1.500 3L8 1l6.500 2v6c0 3-3 5-6.500 6.500C4.500 14 1.500 12 1.500 9zM4 6h8M8 6v5" /></Line>
      <Line w={14} box="0 0 14 14"><path d="M1 1.500h12v11H1zM1 10l4-4 3 3 2-2 3 3" /></Line>
      <Line w={16} box="0 0 16 16"><path d="M8 14L2 8C-1 4 5-.5 8 4c3-4.500 9 0 6 4zM2 8h4l1.500-2.500L9 10l1-2h4" /></Line>
      <Line w={15} box="0 0 16 16"><path d="M6 10C6 5 10 1.500 15 1c-.5 5-4 9-9 9zM6 6L2.500 7 1 10l5-1M10 10l-1 4-3 1V10M1 15l3-3" /></Line>
      <StatusItem href="#"><Line w={12} h={14} box="0 0 12 14"><path d="M6 1v11M1 7l5 5 5-5" /></Line>下载</StatusItem>
      <Line w={14} box="0 0 14 14"><path d="M3 6V1h8v5M1 6h12v5H1zM4 9h6v5H4z" /></Line>
      <Line w={14} box="0 0 14 14"><path d="M13 7a6 6 0 1 1-2-4.500M3 8h8M11 1c3-1 2 3 0 4" /></Line>
      <Line w={14} box="0 0 14 14"><path d="M1 1v12h8M4 1h9v9H4z" /></Line>
      <Line w={14} box="0 0 14 14"><path d="M1 5h2l4-4v12L3 9H1zM9 4q2 3 0 6M11.500 2q3 5 0 10" /></Line>
      <StatusItem as="span"><Line w={14} box="0 0 14 14"><circle cx="6" cy="6" r="5" /><path d="M9.500 9.500L13 13" /></Line>100%</StatusItem>
    </StatusIcons>
  </Status>
);

export default function App() {
  return (
    <Screen>
      <Global />
      <Desk>
        <Gutter>
          <Chip $color="#4a2233" />
          <Chip $color="#3ecbb8" $space={20} />
          <Chip $color="#f0b13a" />
          <Chip $color="#f3d98c" $space={2} />
          <Chip $color="#eeeeef" />
        </Gutter>
        <Browser>
          <Chrome />
          <App_>
            <Banner>
              <h1>基于Vue商品销售系统后台管理</h1>
              <Account>您好<Mark>，</Mark>a | <a href="#">退出</a></Account>
            </Banner>
            <Columns><Navigation /><Workspace /></Columns>
            <Footer>
              <p>© Powered by dashen</p>
              <ScrollStub>
                <Art w={7} h={5} box="0 0 7 5"><path d="M6 0v5H1z" fill="#888" /></Art>
                <Art w={7} h={5} box="0 0 7 5"><path d="M1 0h5v5z" fill="#444" /></Art>
              </ScrollStub>
            </Footer>
          </App_>
        </Browser>
      </Desk>
      <StatusLine />
      <Watermark>CSDN @计算机源码设计案例</Watermark>
    </Screen>
  );
}
